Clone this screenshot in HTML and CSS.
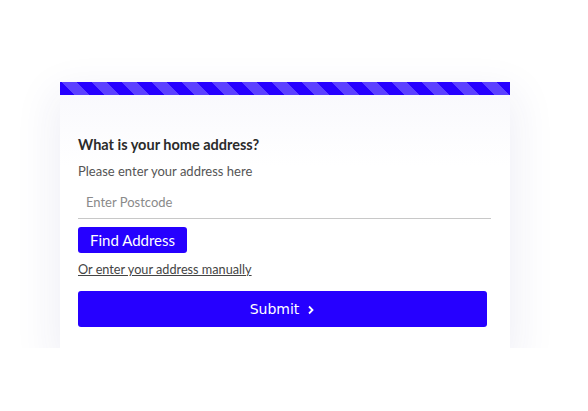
FILE: index.html
```html
<!DOCTYPE html>
<html>
<head>
<meta charset="utf-8">
<link rel="stylesheet" href="styles.css">
</head>
<body>
<div class="page">
  <div class="card">
    <div class="stripe"></div>
    <div class="content">
      <h2 class="title">What is your home address?</h2>
      <p class="subtitle">Please enter your address here</p>
      <input class="postcode" type="text" placeholder="Enter Postcode">
      <button class="find">Find Address</button>
      <a class="manual" href="#">Or enter your address manually</a>
      <button class="submit">Submit <svg class="chev" width="8" height="10" viewBox="0 0 8 10"><path d="M2 1.5 L5.5 5 L2 8.5" fill="none" stroke="#fff" stroke-width="1.8"/></svg></button>
    </div>
  </div>
</div>
</body>
</html>
```
FILE: styles.css
```css
* { box-sizing: border-box; }
html, body { margin: 0; padding: 0; background: #fff; }
body { font-family: "Lato", "Open Sans", sans-serif; }
.page { padding: 82px 78px 0 60px; }
.card {
  width: 450px;
  background: #fff;
  box-shadow: 0 16px 40px 6px rgba(40, 40, 130, 0.075);
}
.stripe {
  height: 13px;
  background: repeating-linear-gradient(45deg, #2600ff 0, #2600ff 10.6px, #5c41ff 10.6px, #5c41ff 21.2px);
}
.content {
  padding: 41px 19px 21px 18px;
  display: flex;
  flex-direction: column;
  align-items: flex-start;
  background: linear-gradient(#f9f9fd, #fff 70px);
}
.title { margin: 0; font-size: 14.5px; font-weight: 700; color: #2b2b2b; line-height: 18px; }
.subtitle { margin: 9px 0 0; font-size: 13px; color: #555; line-height: 16px; }
.postcode {
  margin-top: 12px;
  width: 100%;
  border: none;
  border-bottom: 1px solid #c8c8c8;
  font-family: inherit;
  font-size: 13px;
  padding: 3px 8px 8px;
  outline: none;
  background: transparent;
  color: #333;
}
.postcode::placeholder { color: #8a8a8a; }
.find {
  margin-top: 8px;
  background: #2600ff;
  color: #fff;
  border: none;
  border-radius: 3px;
  font-family: inherit;
  font-size: 15px;
  height: 26px;
  padding: 0 12px;
  width: 109px;
}
.manual { margin-top: 8px; font-size: 12.7px; color: #444; text-decoration: underline; line-height: 16px; }
.submit {
  margin-top: 14px;
  width: 409px;
  height: 36px;
  background: #2600ff;
  color: #fff;
  border: none;
  border-radius: 3px;
  font-family: "DejaVu Sans", Verdana, sans-serif;
  font-size: 14px;
  display: flex;
  align-items: center;
  justify-content: center;
  gap: 8px;
}
.chev { display: block; margin-top: 1px; }
```
